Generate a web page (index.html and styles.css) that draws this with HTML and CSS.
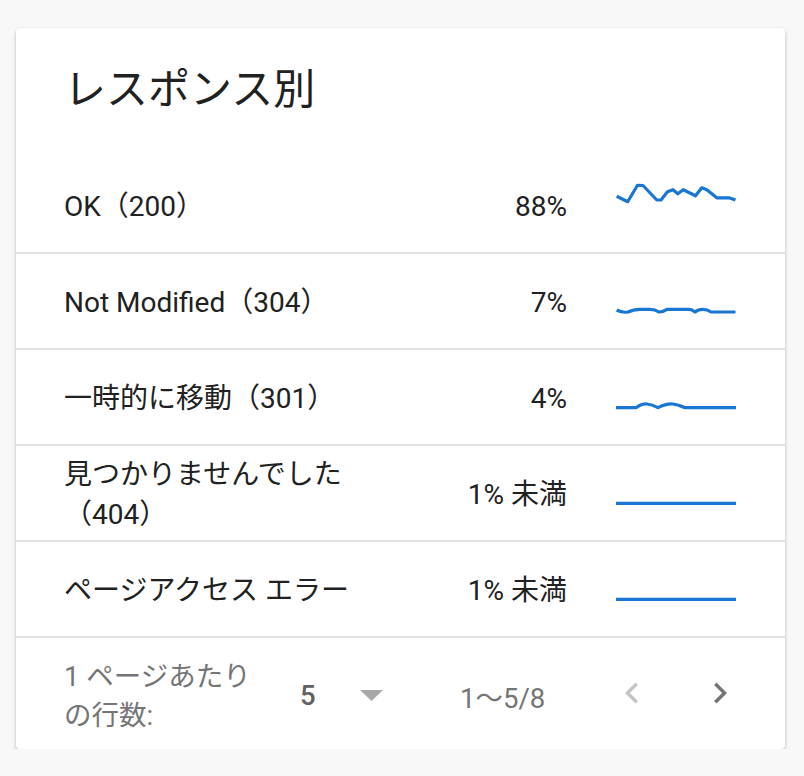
FILE: index.html
```html
<!DOCTYPE html>
<html lang="ja">
<head>
<meta charset="utf-8">
<title>レスポンス別</title>
<link rel="stylesheet" href="styles.css">
</head>
<body>
<div class="card">
  <div class="card-header">
    <h1 class="title">レスポンス別</h1>
  </div>
  <div class="rows">
    <div class="row">
      <div class="label">OK（200）</div>
      <div class="pct">88%</div>
      <svg class="spark" viewBox="0 0 120 48" width="120" height="48"><polyline points="0.7,15.2 11.7,20.7 21.5,4.3 27,4.5 40.8,19 45,19 51.5,10.8 57,8.7 61.8,12.8 67.2,8.7 79.5,14.8 85.8,6.8 90.8,8.7 100.8,16.8 113,16.8 119.5,19"/></svg>
    </div>
    <div class="row">
      <div class="label">Not Modified（304）</div>
      <div class="pct">7%</div>
      <svg class="spark" viewBox="0 0 120 48" width="120" height="48"><path d="M0.7 33 Q6 36 12 35 Q17 32.3 24 32.3 L34 32.3 Q39 32.3 43 35 Q47 35 51 32.3 L73 32.3 Q76 32.3 79 35 Q82 32.3 87 32.3 Q91 32.3 95 35 L119.5 35"/></svg>
    </div>
    <div class="row">
      <div class="label">一時的に移動（301）</div>
      <div class="pct">4%</div>
      <svg class="spark" viewBox="0 0 120 48" width="120" height="48"><path d="M0 34.7 L20 34.7 Q26 30.5 31 31 Q36 31.5 42 34.7 Q50 30.5 57 31 Q62 31.5 69 34.7 L120 34.7"/></svg>
    </div>
    <div class="row">
      <div class="label">見つかりませんでした（404）</div>
      <div class="pct">1% 未満</div>
      <svg class="spark" viewBox="0 0 120 48" width="120" height="48"><path d="M0 34.3 L120 34.3"/></svg>
    </div>
    <div class="row">
      <div class="label">ページアクセス エラー</div>
      <div class="pct">1% 未満</div>
      <svg class="spark" viewBox="0 0 120 48" width="120" height="48"><path d="M0 34.3 L120 34.3"/></svg>
    </div>
  </div>
  <div class="footer">
    <div class="rpp-label">1 ページあたり<br>の行数:</div>
    <div class="rpp-value">5</div>
    <svg class="drop" viewBox="0 0 23 11" width="23" height="11"><polygon points="0,0 23,0 11.5,11"/></svg>
    <div class="range">1〜5/8</div>
    <div class="nav">
      <svg class="chev disabled" viewBox="0 0 24 24" width="42" height="42"><path d="M15.41 7.41L14 6l-6 6 6 6 1.41-1.41L10.83 12z"/></svg>
      <svg class="chev" viewBox="0 0 24 24" width="42" height="42"><path d="M10 6L8.59 7.41 13.17 12l-4.58 4.59L10 18l6-6z"/></svg>
    </div>
  </div>
</div>
</body>
</html>
```

FILE: styles.css
```css
html, body {
  margin: 0;
  padding: 0;
}
body {
  background: #f8f8f8;
  padding: 28px 0 0 16px;
  font-family: Roboto, "Noto Sans CJK JP", sans-serif;
  color: #212121;
}
.card {
  width: 769px;
  height: 721px;
  background: #fff;
  border-radius: 4px;
  box-shadow: 0 3px 4px rgba(0, 0, 0, 0.2), 0 0 3px rgba(0, 0, 0, 0.08);
  display: flex;
  flex-direction: column;
  overflow: hidden;
}
.card-header {
  height: 130px;
  box-sizing: border-box;
  padding: 33px 48px 0 48px;
}
.title {
  margin: 0;
  font-size: 42px;
  font-weight: 400;
  line-height: 50px;
  color: #212121;
  font-family: "Noto Sans CJK JP", sans-serif;
}
.rows {
  display: flex;
  flex-direction: column;
}
.row {
  height: 96px;
  box-sizing: border-box;
  border-bottom: 2px solid #e0e0e0;
  padding: 0 49px 0 48px;
  display: grid;
  grid-template-columns: 1fr 150px 120px;
  column-gap: 49px;
  align-items: center;
  font-size: 28px;
  line-height: 40px;
}
.label, .pct {
  color: #212121;
  padding-top: 3px;
}
.pct {
  text-align: right;
}
.spark {
  display: block;
  overflow: visible;
}
.spark polyline, .spark path {
  fill: none;
  stroke: #1976d2;
  stroke-width: 3.2;
  stroke-linejoin: round;
  stroke-linecap: butt;
}
.footer {
  flex: 1;
  display: flex;
  align-items: center;
  padding: 4px 0 0 48px;
  color: #757575;
  font-size: 27.5px;
}
.rpp-label {
  width: 236px;
  line-height: 39px;
}
.rpp-value {
  font-weight: 500;
  color: #616161;
  width: 14px;
}
.drop {
  display: block;
  margin-left: 46px;
  fill: #a8a8a8;
}
.range {
  margin-left: 77px;
  width: 151px;
}
.nav {
  display: flex;
  gap: 46px;
  margin-top: -6px;
}
.chev {
  display: block;
  fill: #757575;
}
.chev.disabled {
  fill: #c4c4c4;
}
```
